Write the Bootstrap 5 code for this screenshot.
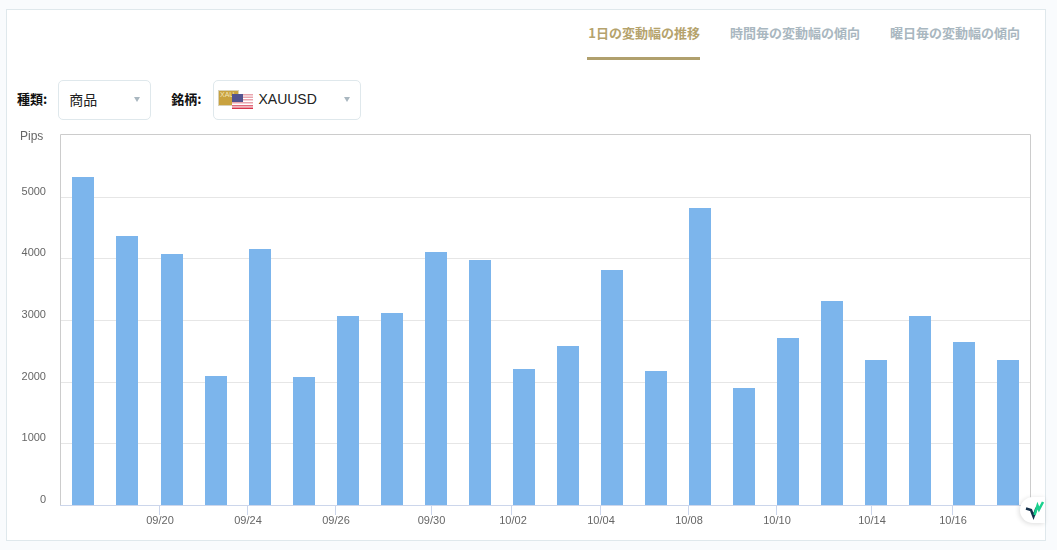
<!DOCTYPE html>
<html lang="ja">
<head>
<meta charset="utf-8">
<title>XAUUSD</title>
<link href="https://cdn.jsdelivr.net/npm/bootstrap@5.3.0/dist/css/bootstrap.min.css" rel="stylesheet">
<style>
html,body{height:550px;overflow:hidden}
body{background:#f9fbfd;font-family:"Liberation Sans","Noto Sans CJK JP",sans-serif;padding:9px 11px 0 6px}
.panel-box{height:532px;background:#fff;border:1px solid #dfe8ec;position:relative}
.tab-bar{height:51px;padding-right:25px;gap:30px}
.tab-link{display:block;height:50px;padding:13px 0 0;font-size:13px;line-height:19px;font-weight:700;color:#a9b7c0;text-decoration:none;font-family:"Noto Sans CJK JP",sans-serif}
.tab-link.is-on{color:#b5a36d;border-bottom:3px solid #b0a06d;padding-left:1px}
.filter-row{height:40px;margin-top:19px;padding-left:10px}
.filter-label{font-size:13px;font-weight:700;color:#111;font-family:"Noto Sans CJK JP",sans-serif;margin:-3px 11px 0 0}
.pick-box{height:40px;border:1px solid #dfe8ec;border-radius:5px;background:#fff;font-size:14px;color:#222;padding:0 10px}
.pick-box span{margin-top:-2px}
.pick-a{width:93px;margin-right:20px}
.pick-b{width:148px;padding-left:4px;margin-left:1px}
.pick-a span{font-family:"Noto Sans CJK JP",sans-serif}
.caret-mark{width:0;height:0;border-left:3.5px solid transparent;border-right:3.5px solid transparent;border-top:5px solid #a9b7c0;margin-left:auto;margin-top:-1px}
.chart-area{display:block;margin-top:10px;width:1038px;height:404px;will-change:transform}
.chart-area text{font-family:"Liberation Sans",sans-serif;font-size:11px;fill:#666}
.chart-area .bar-fill{fill:#7cb5ec}
.chart-area .pips{font-size:12px}
.wave-badge{position:absolute;right:0;bottom:17px;width:25px;height:26px;background:#fff;border-radius:13px 0 0 13px;box-shadow:-1px 1px 5px rgba(0,0,0,.14)}
</style>
</head>
<body>
<div class="panel-box">
  <nav class="tab-bar d-flex justify-content-end">
    <a class="tab-link is-on" href="#">1日の変動幅の推移</a>
    <a class="tab-link" href="#">時間毎の変動幅の傾向</a>
    <a class="tab-link" href="#">曜日毎の変動幅の傾向</a>
  </nav>
  <div class="filter-row d-flex align-items-center">
    <label class="filter-label">種類:</label>
    <div class="pick-box pick-a d-flex align-items-center"><span>商品</span><i class="caret-mark"></i></div>
    <label class="filter-label">銘柄:</label>
    <div class="pick-box pick-b d-flex align-items-center">
      <svg width="36" height="24" viewBox="0 0 36 24" class="me-1">
        <rect x="0.500" y="2.500" width="20" height="15" fill="#c9a23f" stroke="#d9d2b8"/>
        <text x="2" y="9" font-size="7" fill="#f3e6b8" font-family="Liberation Sans">XAU</text>
        <rect x="14" y="6" width="21" height="15" fill="#fff"/>
        <rect x="14" y="11" width="21" height="1.500" fill="#e9a5ae"/>
        <rect x="14" y="14" width="21" height="1.500" fill="#e9a5ae"/>
        <rect x="14" y="17" width="21" height="1.500" fill="#e06a7b"/>
        <rect x="14" y="19.500" width="21" height="1.500" fill="#d8354b"/>
        <rect x="14" y="6" width="21" height="1.500" fill="#e9a5ae"/>
        <rect x="14" y="8.500" width="21" height="1.500" fill="#e9a5ae"/>
        <rect x="14" y="6" width="11" height="8" fill="#53548f"/>
      </svg>
      <span>XAUUSD</span><i class="caret-mark"></i>
    </div>
  </div>
  <svg class="chart-area" viewBox="0 0 1038 404">
    <path d="M53 67.500H1023M53 128.500H1023M53 190.500H1023M53 252.500H1023M53 313.500H1023" stroke="#e6e6e6"/>
    <path d="M53.500 375V4.500H1023.500V375" fill="none" stroke="#ccc"/>
    <text class="pips" x="13" y="10">Pips</text>
    <g text-anchor="end">
      <text x="39" y="65">5000</text><text x="39" y="126">4000</text><text x="39" y="188">3000</text>
      <text x="39" y="250">2000</text><text x="39" y="311">1000</text><text x="39" y="373">0</text>
    </g>
    <g text-anchor="middle">
      <text x="153" y="394">09/20</text><text x="241" y="394">09/24</text><text x="329" y="394">09/26</text>
      <text x="424.500" y="394">09/30</text><text x="506" y="394">10/02</text><text x="594" y="394">10/04</text>
      <text x="682" y="394">10/08</text><text x="770" y="394">10/10</text><text x="865" y="394">10/14</text>
      <text x="946" y="394">10/16</text>
    </g>
    <g class="bar-fill">
      <rect x="65" y="47" width="22" height="328"/><rect x="109" y="106" width="22" height="269"/>
      <rect x="154" y="124" width="22" height="251"/><rect x="198" y="246" width="22" height="129"/>
      <rect x="242" y="119" width="22" height="256"/><rect x="286" y="247" width="22" height="128"/>
      <rect x="330" y="186" width="22" height="189"/><rect x="374" y="183" width="22" height="192"/>
      <rect x="418" y="122" width="22" height="253"/><rect x="462" y="130" width="22" height="245"/>
      <rect x="506" y="239" width="22" height="136"/><rect x="550" y="216" width="22" height="159"/>
      <rect x="594" y="140" width="22" height="235"/><rect x="638" y="241" width="22" height="134"/>
      <rect x="682" y="78" width="22" height="297"/><rect x="726" y="258" width="22" height="117"/>
      <rect x="770" y="208" width="22" height="167"/><rect x="814" y="171" width="22" height="204"/>
      <rect x="858" y="230" width="22" height="145"/><rect x="902" y="186" width="22" height="189"/>
      <rect x="946" y="212" width="22" height="163"/><rect x="990" y="230" width="22" height="145"/>
    </g>
    <path d="M53 375.500H1023" stroke="#ccd6eb"/>
    <path d="M152.500 375v10M240.500 375v10M328.500 375v10M424.500 375v10M504.500 375v10M593.500 375v10M681.500 375v10M769.500 375v10M864.500 375v10M945.500 375v10" stroke="#ccd6eb"/>
  </svg>
  <div class="wave-badge">
    <svg width="25" height="26" viewBox="0 0 25 26"><path d="M6 11.500l5 1.500 2.500 6.500 3-8.500" fill="none" stroke="#15304b" stroke-width="2.500"/><path d="M14.500 18l3-9.500 1.500 4 4-7.500" fill="none" stroke="#1ad18e" stroke-width="2.500"/></svg>
  </div>
</div>
</body>
</html>
